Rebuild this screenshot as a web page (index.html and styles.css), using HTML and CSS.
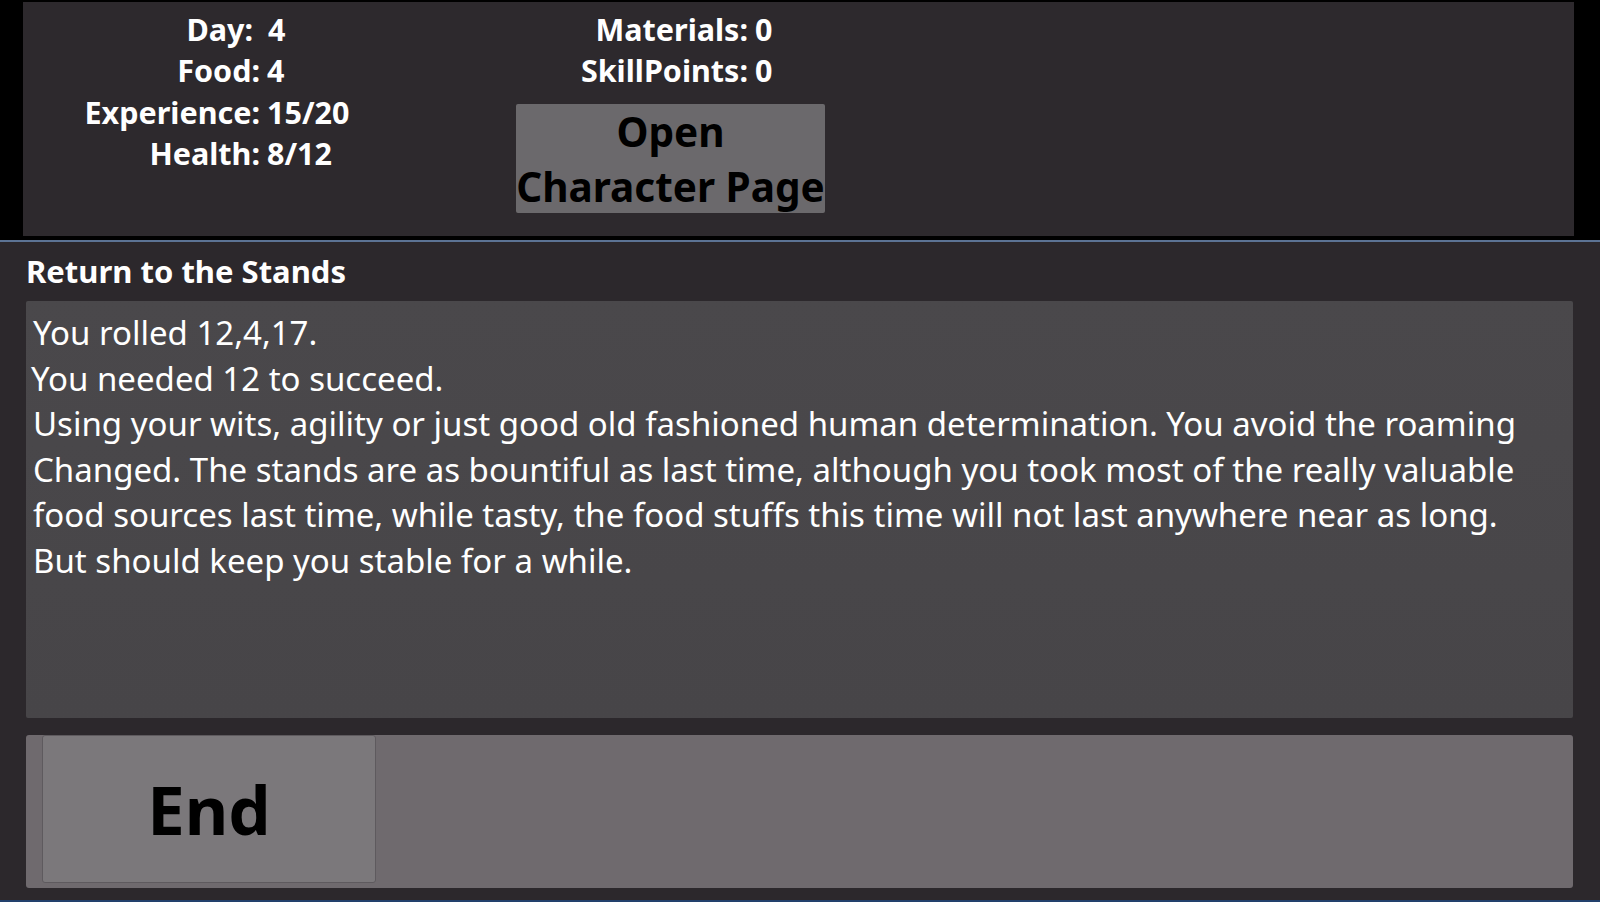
FILE: index.html
```html
<!DOCTYPE html>
<html>
<head>
<meta charset="utf-8">
<link rel="stylesheet" href="styles.css">
</head>
<body>
<div class="top">
  <div class="panel">
    <div class="stats">
      <span class="lbl day">Day:</span><span class="val day">&nbsp;4</span>
      <span class="lbl">Food:</span><span class="val">4</span>
      <span class="lbl">Experience:</span><span class="val">15/20</span>
      <span class="lbl">Health:</span><span class="val">8/12</span>
    </div>
    <div class="col2">
      <div class="stats2">
        <span class="lbl">Materials:</span><span class="val">0</span>
        <span class="lbl">SkillPoints:</span><span class="val">0</span>
      </div>
      <button class="charbtn">Open<br>Character Page</button>
    </div>
  </div>
</div>
<div class="main">
  <h1 class="title">Return to the Stands</h1>
  <div class="story">
    <p class="l1">You rolled 12,4,17.</p>
    <p class="l2">You needed 12 to succeed.</p>
    <p class="l1">Using your wits, agility or just good old fashioned human determination. You avoid the roaming Changed. The stands are as bountiful as last time, although you took most of the really valuable food sources last time, while tasty, the food stuffs this time will not last anywhere near as long. But should keep you stable for a while.</p>
  </div>
  <div class="actions">
    <button class="endbtn">End</button>
  </div>
</div>
</body>
</html>
```
FILE: styles.css
```css
html, body {
  margin: 0;
  padding: 0;
  width: 1600px;
  height: 902px;
  overflow: hidden;
  background: #2c282c;
  font-family: "Noto Sans", "Open Sans", sans-serif;
}

.top {
  background: #000;
  height: 242px;
  box-sizing: border-box;
  padding: 2px 26px 4px 23px;
  border-bottom: 2px solid #5c7394;
}

.panel {
  height: 100%;
  background: #2d292d;
  display: flex;
  align-items: flex-start;
}

.stats, .stats2 {
  display: grid;
  column-gap: 7px;
  color: #fff;
  font-weight: 700;
  font-size: 30.5px;
  line-height: 41.4px;
}

.stats {
  grid-template-columns: 237px 120px;
  margin-top: 7px;
}

.stats2 {
  grid-template-columns: 231px 60px;
}

.lbl { text-align: right; }
.val { text-align: left; white-space: pre; }
.lbl.day { margin-right: 7px; }
.val.day { margin-left: -7px; }

.col2 {
  margin-left: 130px;
  margin-top: 7px;
  display: flex;
  flex-direction: column;
}

.charbtn {
  margin-top: 12px;
  margin-left: -1px;
  width: 309px;
  height: 109px;
  background: #6b696c;
  border: none;
  border-radius: 2px;
  padding: 0;
  font-family: "Noto Sans", "Open Sans", sans-serif;
  font-weight: 700;
  font-size: 40.5px;
  line-height: 55px;
  color: #000;
  white-space: nowrap;
  overflow: visible;
}

.main {
  height: 660px;
  box-sizing: border-box;
  padding: 0 27px 0 26px;
  border-bottom: 2px solid #22406c;
}

.title {
  margin: 0;
  height: 59px;
  line-height: 59px;
  font-size: 31px;
  font-weight: 700;
  color: #fff;
}

.story {
  height: 417px;
  box-sizing: border-box;
  background: linear-gradient(180deg, #4a484b, #474548);
  border-radius: 2px;
  padding: 9px 40px 0 7px;
  color: #fff;
  font-size: 33px;
  line-height: 45.5px;
}

.story p { margin: 0; }
.story .l2 { margin-left: -2px; }

.actions {
  margin-top: 17px;
  height: 153px;
  background: #6f6a6e;
  border-radius: 3px;
  padding: 0 0 5px 16px;
  box-sizing: border-box;
  display: flex;
}

.endbtn {
  width: 334px;
  height: 148px;
  background: #7b787b;
  border: 1px solid #5e5a5e;
  border-radius: 3px;
  font-family: "Noto Sans", "Open Sans", sans-serif;
  font-weight: 700;
  font-size: 67px;
  color: #000;
  padding: 0;
}
```
